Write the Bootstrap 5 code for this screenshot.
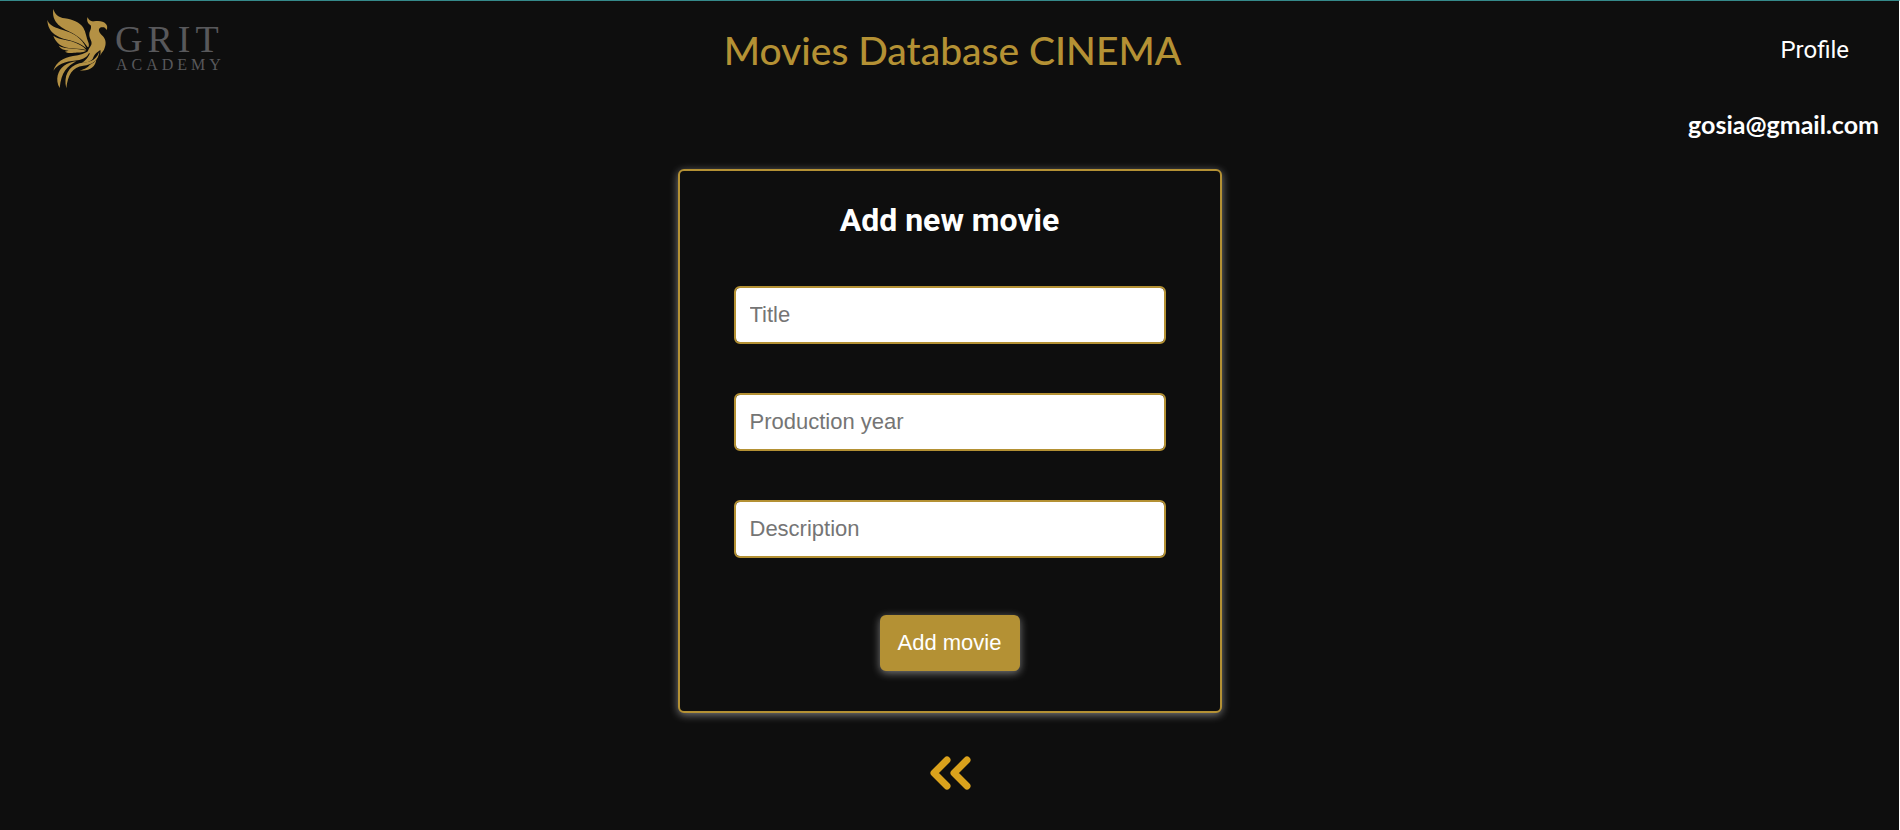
<!DOCTYPE html>
<html lang="en">
<head>
<meta charset="utf-8">
<meta name="viewport" content="width=device-width, initial-scale=1">
<title>Movies Database CINEMA</title>
<link href="https://cdn.jsdelivr.net/npm/bootstrap@5.3.0/dist/css/bootstrap.min.css" rel="stylesheet">
<style>
  :root { --gold: #b49134; --ink: #0e0e0e; }
  body { background: var(--ink); color: #fff; font-family: Roboto, "Liberation Sans", sans-serif; border-top: 1px solid #35898a; border-right: 1px solid #fff; min-height: 100vh; }
  .site-head { height: 98px; padding: 0 50px 0 44px; }
  .brand-logo { width: 180px; height: 84px; display: block; }
  .site-title { font-family: Lato, sans-serif; font-size: 39px; line-height: 48px; padding-left: 12px; color: var(--gold); }
  .profile-link { font-size: 24px; line-height: 28px; color: #fff; }
  .user-mail { font-family: Lato, sans-serif; font-size: 25px; line-height: 28px; padding: 11px 20px 0; }
  .movie-card { width: 544px; max-width: 100%; min-height: 544px; margin-top: 31px; padding: 29px 54px 40px; background: var(--ink); border: 2px solid var(--gold); border-radius: 6px; box-shadow: 0 2px 8px rgba(255,255,255,.45); }
  .form-heading { font-size: 32px; line-height: 40px; font-weight: 700; margin-bottom: 46px; }
  .movie-field { font-family: "Liberation Sans", sans-serif; font-size: 22px; line-height: 26px; height: 58px; padding: 14px; border: 2px solid var(--gold); border-radius: 6px; margin-bottom: 49px; }
  .movie-field::placeholder { color: #757575; }
  .add-btn, .add-btn:hover { font-family: "Liberation Sans", sans-serif; font-size: 22px; line-height: 26px; width: 140px; height: 56px; padding: 0; margin-top: 8px; background: var(--gold); color: #fff; border: 0; border-radius: 6px; box-shadow: 0 2px 8px rgba(255,255,255,.45); }
  .back-link { margin-top: 42px; }
</style>
</head>
<body>
<header class="site-head row g-0 align-items-center">
  <div class="col">
    <a href="#" class="d-block" aria-label="Grit Academy">
      <svg class="brand-logo" viewBox="44 8 180 84">
        <g fill="#b49144" transform="translate(36 0) scale(.3333)">
          <path d="M52 27C57 44 68 52 86 55C112 59 132 68 142 83C150 97 151 113 158 130C160 139 157 146 153 139C144 123 126 107 101 95C72 82 46 64 52 27Z"/>
          <path d="M34 60C42 79 59 83 81 90C110 98 139 114 151 145C139 134 120 126 101 121C67 113 36 101 34 60Z"/>
          <path d="M52 107C68 118 87 118 106 124C126 130 142 139 151 150C131 145 115 146 98 144C78 141 60 130 52 107Z"/>
          <path d="M68 137C88 148 121 143 151 152C139 159 125 157 114 158C102 160 93 159 87 155L98 152C85 150 75 148 68 137Z"/>
          <path d="M155 52C158 61 165 65 174 64C188 61 203 63 209 71C214 75 215 83 212 90C207 80 201 81 195 82C183 87 190 99 201 109C211 120 211 135 204 149C199 156 195 161 193 167C194 159 194 154 193 150C181 158 175 163 170 177C163 186 149 188 138 189C150 181 157 171 162 160C151 163 155 151 164 138C173 125 158 116 160 101C161 92 168 85 164 76C155 71 151 60 155 52Z"/>
          <path d="M52 212C61 185 83 173 111 168C132 166 149 160 161 151C159 166 149 176 130 180C101 184 70 185 52 212Z"/>
          <path d="M121 184C93 199 76 216 71 264C57 239 65 211 84 197C95 189 107 186 121 184Z"/>
          <path d="M91 265C82 229 97 199 130 190C155 185 178 187 190 155C188 181 169 194 142 197C109 201 95 225 91 265Z"/>
          <path d="M181 178C179 202 158 215 131 211C148 207 156 201 162 194C171 190 177 186 181 178Z"/>
        </g>
        <g font-family="'Liberation Serif', serif" fill="#58585b">
          <text x="115" y="52" font-size="38" letter-spacing="5">GRIT</text>
          <text x="116" y="70" font-size="16" letter-spacing="4">ACADEMY</text>
        </g>
      </svg>
    </a>
  </div>
  <div class="col-auto"><h1 class="site-title m-0">Movies Database CINEMA</h1></div>
  <nav class="col text-end"><a href="#" class="profile-link text-decoration-none">Profile</a></nav>
</header>
<div class="user-mail text-end fw-bold">gosia@gmail.com</div>
<main class="d-flex flex-column align-items-center">
  <form class="movie-card d-flex flex-column align-items-center">
    <h2 class="form-heading">Add new movie</h2>
    <input class="movie-field form-control" type="text" placeholder="Title" aria-label="Title">
    <input class="movie-field form-control" type="text" placeholder="Production year" aria-label="Production year">
    <input class="movie-field form-control" type="text" placeholder="Description" aria-label="Description">
    <button class="add-btn btn" type="button">Add movie</button>
  </form>
  <a href="#" class="back-link" aria-label="Back">
    <svg class="d-block" width="42" height="36" viewBox="0 0 42 36" fill="none" stroke="#daa21c" stroke-width="7" stroke-linecap="round" stroke-linejoin="round"><path d="M18 5L5 18L18 31M38 5L25 18L38 31"/></svg>
  </a>
</main>
<script src="https://cdn.jsdelivr.net/npm/bootstrap@5.3.0/dist/js/bootstrap.bundle.min.js"></script>
</body>
</html>
